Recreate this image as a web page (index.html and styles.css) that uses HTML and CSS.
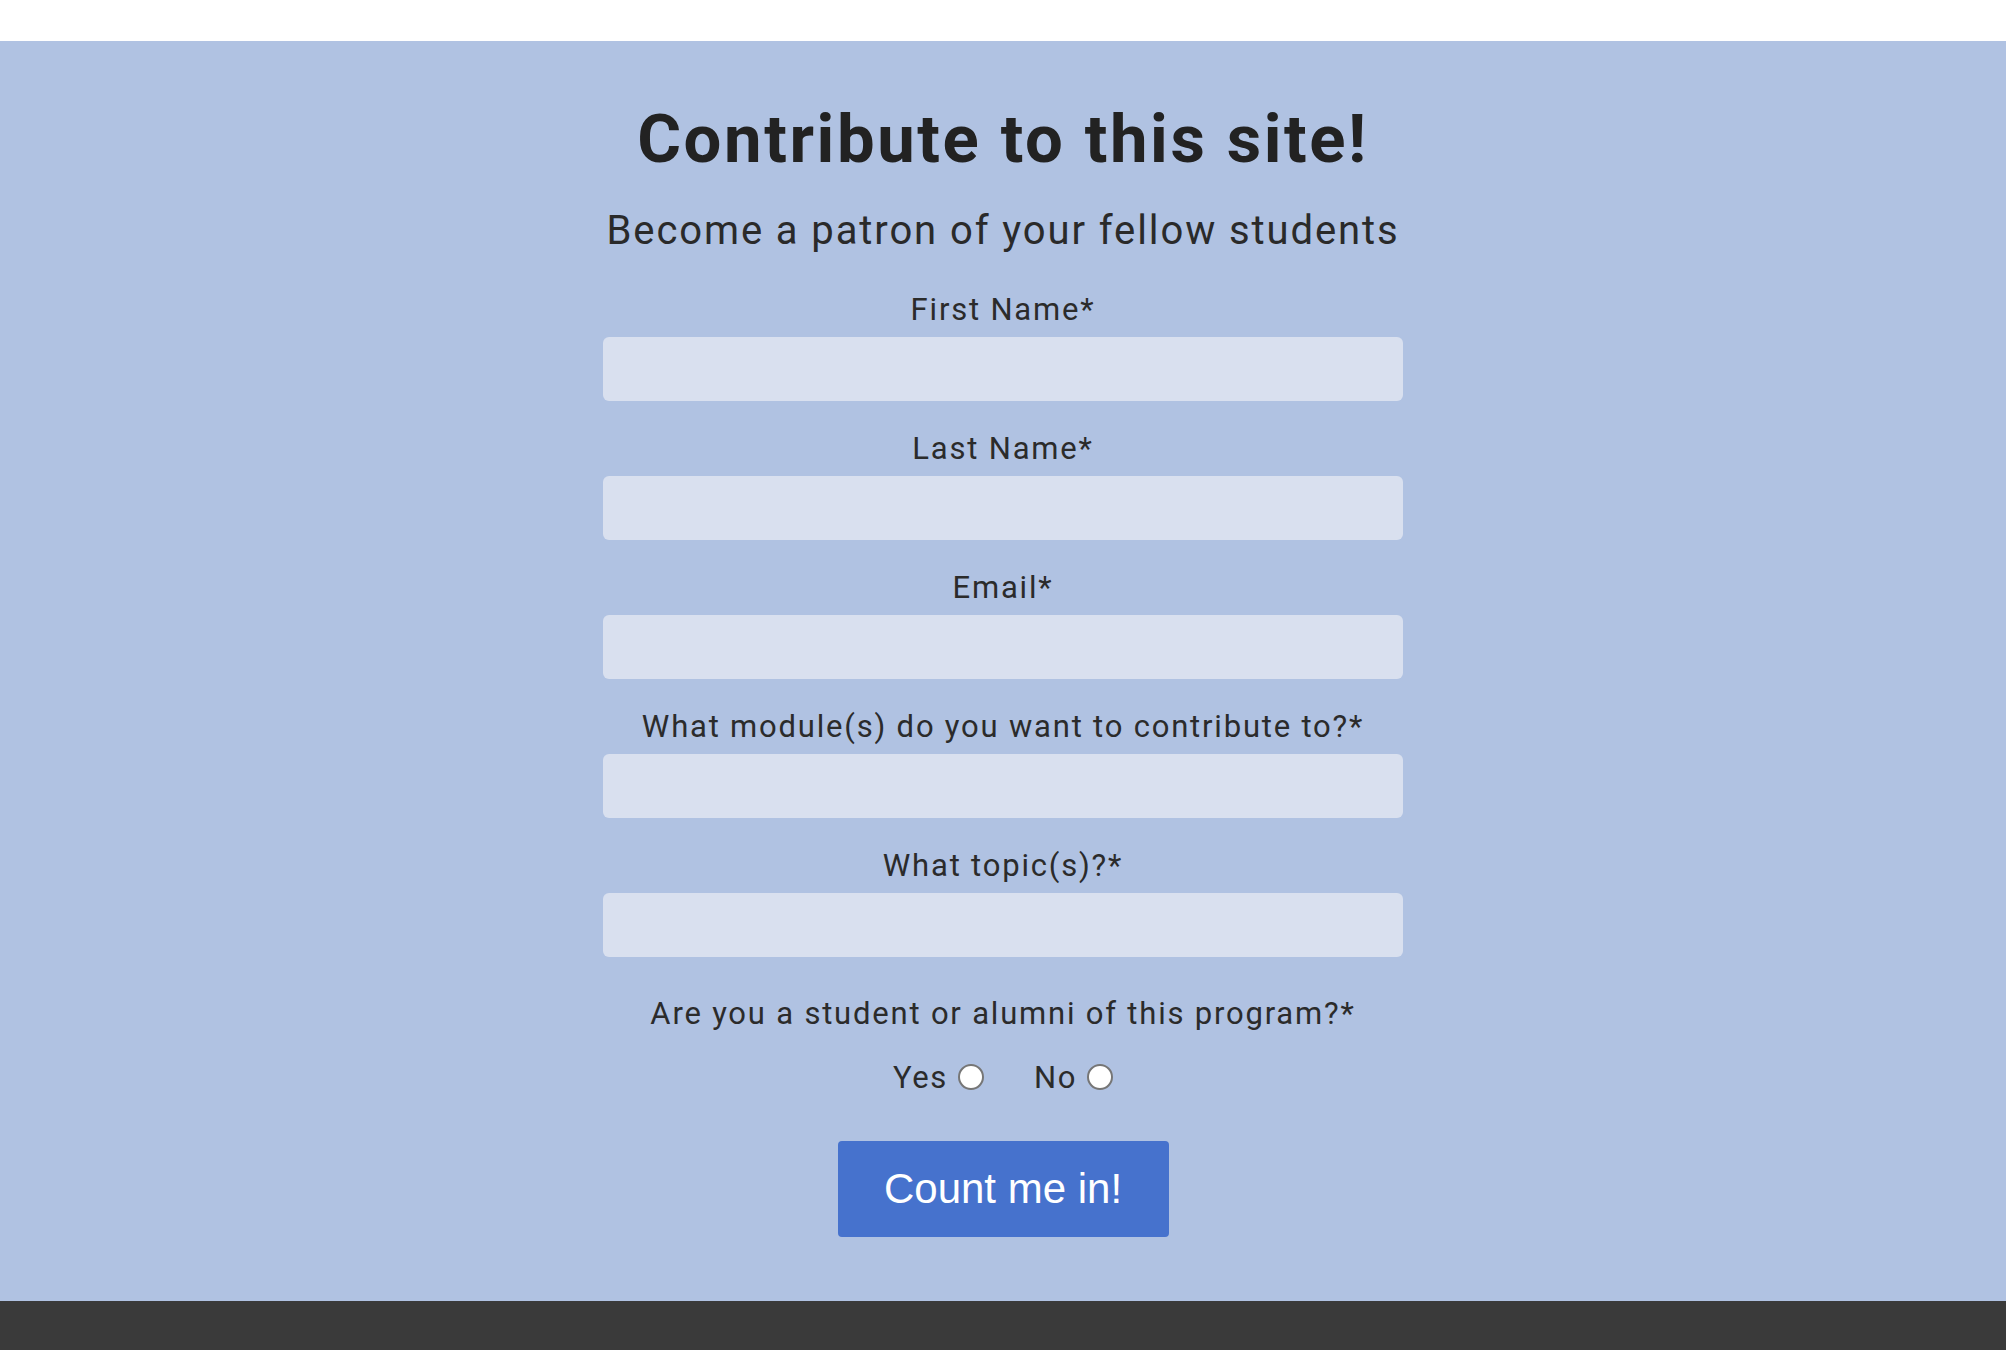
FILE: index.html
```html
<!DOCTYPE html>
<html lang="en">
<head>
<meta charset="utf-8">
<title>Contribute</title>
<link rel="stylesheet" href="styles.css">
</head>
<body>
<header class="topbar"></header>
<main class="contribute">
  <h1 class="title">Contribute to this site!</h1>
  <p class="subtitle">Become a patron of your fellow students</p>
  <form class="form">
    <div class="field">
      <label class="label" for="fname">First Name*</label>
      <input class="input" id="fname" type="text">
    </div>
    <div class="field">
      <label class="label" for="lname">Last Name*</label>
      <input class="input" id="lname" type="text">
    </div>
    <div class="field">
      <label class="label" for="email">Email*</label>
      <input class="input" id="email" type="email">
    </div>
    <div class="field">
      <label class="label" for="module">What module(s) do you want to contribute to?*</label>
      <input class="input" id="module" type="text">
    </div>
    <div class="field">
      <label class="label" for="topic">What topic(s)?*</label>
      <input class="input" id="topic" type="text">
    </div>
    <p class="label question">Are you a student or alumni of this program?*</p>
    <div class="choices">
      <label class="choice">Yes <input class="radio" type="radio" name="student"></label>
      <label class="choice">No <input class="radio" type="radio" name="student"></label>
    </div>
    <button class="submit" type="button">Count me in!</button>
  </form>
</main>
<footer class="footer"></footer>
</body>
</html>
```
FILE: styles.css
```css
* { box-sizing: border-box; }
html, body { margin: 0; padding: 0; }
body {
  font-family: Roboto, "Liberation Sans", sans-serif;
  background: #ffffff;
}
.topbar {
  height: 41px;
  background: #ffffff;
}
.contribute {
  background: #b0c2e2;
  padding: 58px 0 64px;
  display: flex;
  flex-direction: column;
  align-items: center;
  color: #2b2b2b;
}
.title {
  margin: 0;
  font-size: 67px;
  line-height: 80px;
  font-weight: 700;
  letter-spacing: 2.6px;
  color: #222222;
}
.subtitle {
  margin: 28px 0 0;
  font-size: 40px;
  line-height: 48px;
  letter-spacing: 1.9px;
  color: #2a2a2a;
}
.form {
  display: flex;
  flex-direction: column;
  align-items: center;
  margin-top: 7px;
}
.field {
  display: flex;
  flex-direction: column;
  align-items: center;
  margin-top: 30px;
}
.label {
  font-size: 31px;
  line-height: 36px;
  letter-spacing: 1.8px;
  color: #2b2b2b;
}
.input {
  margin-top: 9px;
  width: 800px;
  height: 64px;
  border: none;
  border-radius: 6px;
  background: #d9e0ef;
}
.question {
  margin: 39px 0 0;
}
.choices {
  margin-top: 28px;
  display: flex;
  gap: 50px;
  height: 36px;
  align-items: center;
}
.choice {
  display: flex;
  align-items: center;
  gap: 10px;
  font-size: 31px;
  line-height: 36px;
  letter-spacing: 1.6px;
  color: #2b2b2b;
}
.radio {
  appearance: none;
  -webkit-appearance: none;
  margin: -3px 0 0;
  width: 26px;
  height: 26px;
  border-radius: 50%;
  border: 2px solid #767676;
  background: #ffffff;
}
.submit {
  margin-top: 45px;
  width: 331px;
  height: 96px;
  border: none;
  border-radius: 4px;
  background: #4672cd;
  color: #ffffff;
  font-family: "Liberation Sans", Arial, sans-serif;
  font-size: 42px;
  padding: 0;
}
.footer {
  height: 120px;
  background: #3a3a3a;
}
```
